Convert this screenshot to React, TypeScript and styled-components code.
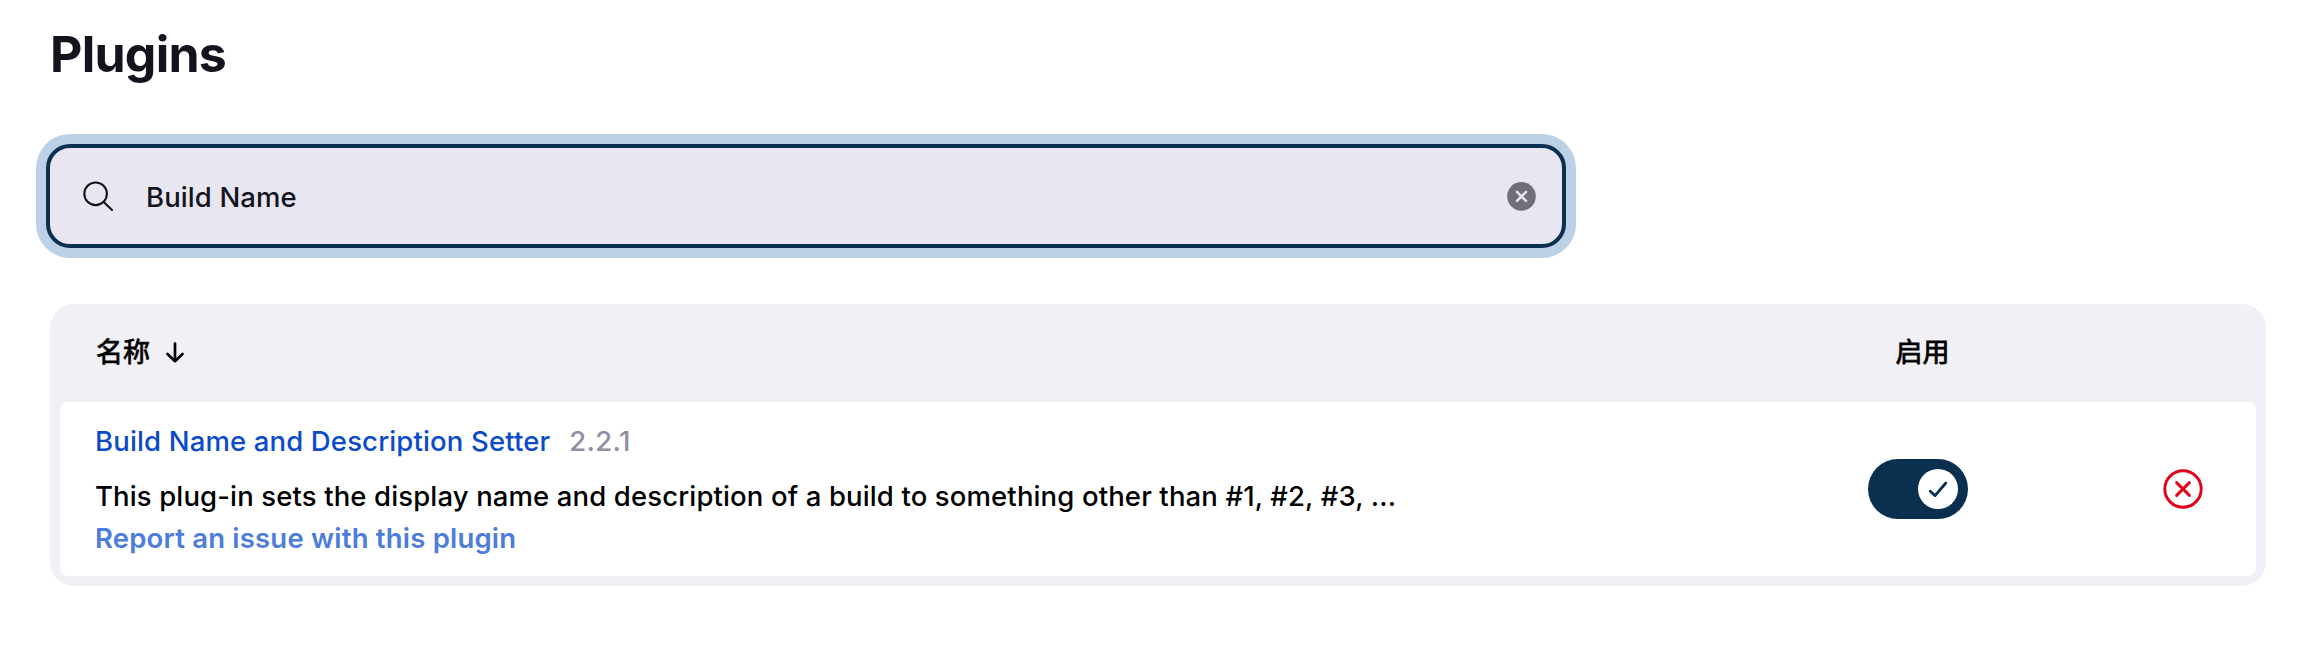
import React from "react";
import styled, { createGlobalStyle } from "styled-components";

const GlobalStyle = createGlobalStyle`
  *, *::before, *::after { box-sizing: border-box; }
  body {
    margin: 0;
    background: #fff;
    color: #000;
    font-family: Inter, "Noto Sans CJK SC", sans-serif;
    font-size: 27.5px;
    font-weight: 450;
  }
`;

const Page = styled.main`
  display: flex;
  flex-direction: column;
  align-items: flex-start;
  height: 668px;
  padding: 19px 32px 0 50px;
`;

const Title = styled.h1`
  margin: 0;
  height: 70px;
  line-height: 70px;
  font-size: 50px;
  font-weight: 700;
  letter-spacing: -0.75px;
  color: #14141f;
`;

const SearchBar = styled.label`
  display: flex;
  align-items: center;
  width: 1520px;
  height: 104px;
  margin: 55px 0 56px -4px;
  padding: 0 25px 0 32px;
  border: 4px solid #0b2f4f;
  border-radius: 24px;
  background: #e8e6f1;
  box-shadow: 0 0 0 10px #bcd1e5;
`;

const SearchInput = styled.input`
  flex: 1;
  min-width: 0;
  height: 60px;
  margin-left: 32px;
  padding: 2px 0 0;
  border: 0;
  outline: 0;
  background: transparent;
  color: #14141f;
  font: inherit;
  letter-spacing: 0.1px;
`;

const IconButton = styled.button`
  display: flex;
  padding: 0;
  border: 0;
  background: none;
  cursor: pointer;
`;

const Table = styled.section`
  align-self: stretch;
  padding: 0 10px 10px;
  border-radius: 24px;
  background: #f1f0f7;
`;

const Columns = styled.div`
  display: grid;
  grid-template-columns: 1fr 384px 146px;
  align-items: center;
`;

const HeaderRow = styled(Columns)`
  height: 98px;
`;

const PluginRow = styled(Columns)`
  height: 174px;
  border-radius: 8px;
  background: #fff;
`;

const NameHeading = styled.div`
  display: flex;
  align-items: center;
  gap: 15px;
  padding-left: 36px;
`;

const HeadingText = styled.span`
  font-size: 27px;
  font-weight: 400;
  line-height: 40px;
  -webkit-text-stroke: 0.8px #000;
`;

const EnabledCell = styled.div<{ $inset?: number }>`
  display: flex;
  justify-content: center;
  padding-left: ${({ $inset = 0 }) => $inset}px;
`;

const ActionCell = styled.div`
  display: flex;
  justify-content: center;
`;

const Details = styled.div`
  display: flex;
  flex-direction: column;
  padding-left: 35px;
`;

const NameLine = styled.div`
  display: flex;
  gap: 19px;
  height: 55px;
  line-height: 42px;
`;

const PluginLink = styled.a`
  color: #0b4bcb;
  letter-spacing: 0.15px;
  text-decoration: none;
`;

const Version = styled.span`
  color: #8f8ea6;
  letter-spacing: 0.35px;
`;

const Description = styled.p`
  margin: 0;
  line-height: 42px;
  letter-spacing: 0.13px;
`;

const IssueLink = styled.a`
  line-height: 42px;
  color: #4d7ddb;
  font-weight: 600;
  letter-spacing: 0.2px;
  text-decoration: none;
`;

const Toggle = styled.button`
  display: flex;
  justify-content: flex-end;
  align-items: center;
  width: 100px;
  height: 60px;
  padding: 10px;
  border: 0;
  border-radius: 30px;
  background: #0b2f4f;
`;

const Knob = styled.span`
  display: flex;
  width: 40px;
  height: 40px;
  border-radius: 50%;
  background: #fff;
`;

const SearchIcon = () => (
  <svg width="32" height="32" viewBox="0 0 32 32" fill="none" stroke="#14141f" strokeWidth="2.1">
    <circle cx="13.6" cy="13.8" r="11.3" />
    <path d="M21.7 21.9 30 30" strokeLinecap="round" />
  </svg>
);

const ClearIcon = () => (
  <svg width="30" height="30" viewBox="0 0 30 30" fill="none">
    <circle cx="14.5" cy="15.4" r="14.3" fill="#706e7b" />
    <path d="m10 10.9 9 9m0-9-9 9" stroke="#e8e6f1" strokeWidth="2.5" strokeLinecap="round" />
  </svg>
);

const SortIcon = () => (
  <svg width="20" height="24" viewBox="0 0 20 24" fill="none" stroke="#000" strokeWidth="2.7" strokeLinecap="round" strokeLinejoin="round">
    <path d="M10 2.5v17.5M2.5 13l7.5 7.2 7.5-7.2" />
  </svg>
);

const CheckIcon = () => (
  <svg width="40" height="40" viewBox="0 0 40 40" fill="none" stroke="#0b2f4f" strokeWidth="2.8" strokeLinecap="round" strokeLinejoin="round">
    <path d="m12.2 22.2 4.9 4.4L27.8 14" />
  </svg>
);

const RemoveIcon = () => (
  <svg width="40" height="40" viewBox="0 0 40 40" fill="none" stroke="#e1001a" strokeWidth="2.9" strokeLinecap="round">
    <circle cx="20" cy="20" r="18.2" />
    <path d="m13.6 13.6 12.8 12.8m0-12.8L13.6 26.4" />
  </svg>
);

export default function App() {
  return (
    <>
      <GlobalStyle />
      <Page>
        <Title>Plugins</Title>
        <SearchBar>
          <SearchIcon />
          <SearchInput defaultValue="Build Name" />
          <IconButton type="button">
            <ClearIcon />
          </IconButton>
        </SearchBar>
        <Table>
          <HeaderRow>
            <NameHeading>
              <HeadingText>名称</HeadingText>
              <SortIcon />
            </NameHeading>
            <EnabledCell $inset={9}>
              <HeadingText>启用</HeadingText>
            </EnabledCell>
            <span />
          </HeaderRow>
          <PluginRow>
            <Details>
              <NameLine>
                <PluginLink href="#">Build Name and Description Setter</PluginLink>
                <Version>2.2.1</Version>
              </NameLine>
              <Description>
                This plug-in sets the display name and description of a build to something other than #1, #2, #3, ...
              </Description>
              <IssueLink href="#">Report an issue with this plugin</IssueLink>
            </Details>
            <EnabledCell>
              <Toggle type="button">
                <Knob>
                  <CheckIcon />
                </Knob>
              </Toggle>
            </EnabledCell>
            <ActionCell>
              <IconButton type="button">
                <RemoveIcon />
              </IconButton>
            </ActionCell>
          </PluginRow>
        </Table>
      </Page>
    </>
  );
}
